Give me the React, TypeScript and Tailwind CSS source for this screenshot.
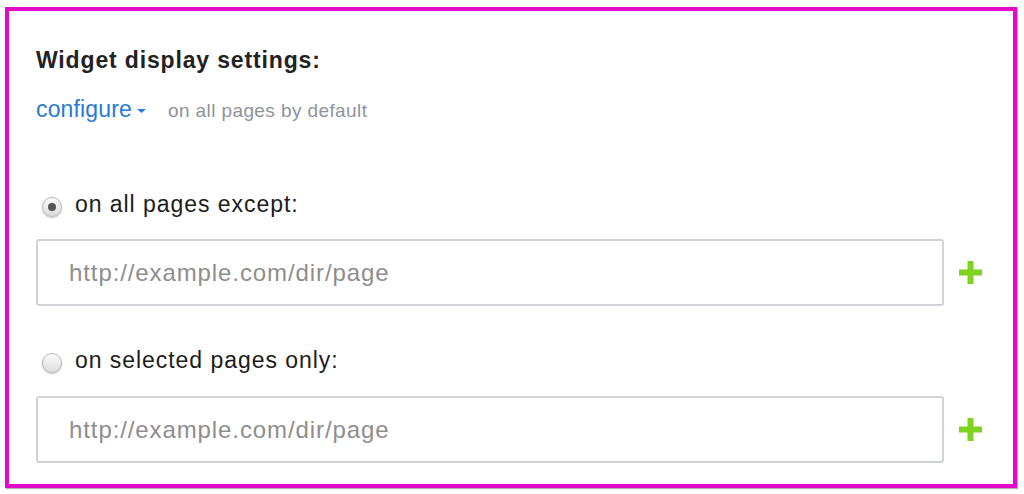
import type { ReactNode } from 'react';

const font = { fontFamily: '"Liberation Sans", Arial, Helvetica, sans-serif' };

function Radio({ checked }: { checked?: boolean }) {
  return (
    <span className="ml-[6px] mt-[5px] flex h-[20px] w-[20px] shrink-0 items-center justify-center rounded-full border border-[#b9b9b9] bg-gradient-to-b from-[#fbfbfb] to-[#dcdcdc] shadow-[0_1px_2px_rgba(0,0,0,0.25)]">
      {checked && <span className="h-[8px] w-[8px] rounded-full bg-[#555]" />}
    </span>
  );
}

function Plus() {
  return (
    <svg width="23" height="23" viewBox="0 0 23 23" className="shrink-0">
      <rect x="0" y="8.5" width="23" height="6" fill="#7ed321" />
      <rect x="8.5" y="0" width="6" height="23" fill="#7ed321" />
    </svg>
  );
}

function UrlField() {
  return (
    <div className="flex items-center">
      <input
        type="text"
        placeholder="http://example.com/dir/page"
        className="h-[67px] w-[908px] rounded-[3px] border-2 border-[#d0d3d6] bg-white pl-[31px] text-[24px] tracking-[0.9px] text-[#333] outline-none placeholder:text-[#8e8e8e]"
        style={font}
      />
      <span className="ml-[15px]">
        <Plus />
      </span>
    </div>
  );
}

function Option({ checked, children }: { checked?: boolean; children: ReactNode }) {
  return (
    <div className="flex items-center">
      <Radio checked={checked} />
      <span className="ml-[13px] text-[23px] leading-[26px] tracking-[0.95px] text-[#1c1c1c]">{children}</span>
    </div>
  );
}

export default function App() {
  return (
    <div className="h-[494px] w-[1024px] bg-white pl-[5px] pt-[7px]" style={font}>
      <div className="h-[481px] w-[1012px] border-4 border-[#e20ac8] bg-white pl-[27px] pt-[36px] shadow-[1px_1px_1px_rgba(0,0,0,0.3)]">
        <h2 className="text-[23px] font-bold leading-[26px] tracking-[0.85px] text-[#222]">Widget display settings:</h2>

        <div className="mt-[23px] flex items-baseline leading-[26px]">
          <span className="text-[23px] tracking-[0.15px] text-[#2a7ad5]">
            configure
            <svg width="9" height="4" viewBox="0 0 9 4" className="ml-[5px] inline-block align-middle">
              <path d="M0 0 L9 0 L4.5 4 Z" fill="#2a7ad5" />
            </svg>
          </span>
          <span className="ml-[22px] text-[19px] tracking-[0.4px] text-[#8d949c]">on all pages by default</span>
        </div>

        <div className="mt-[67px]">
          <Option checked>on all pages except:</Option>
        </div>
        <div className="mt-[22px]">
          <UrlField />
        </div>

        <div className="mt-[41px]">
          <Option>on selected pages only:</Option>
        </div>
        <div className="mt-[23px]">
          <UrlField />
        </div>
      </div>
    </div>
  );
}
